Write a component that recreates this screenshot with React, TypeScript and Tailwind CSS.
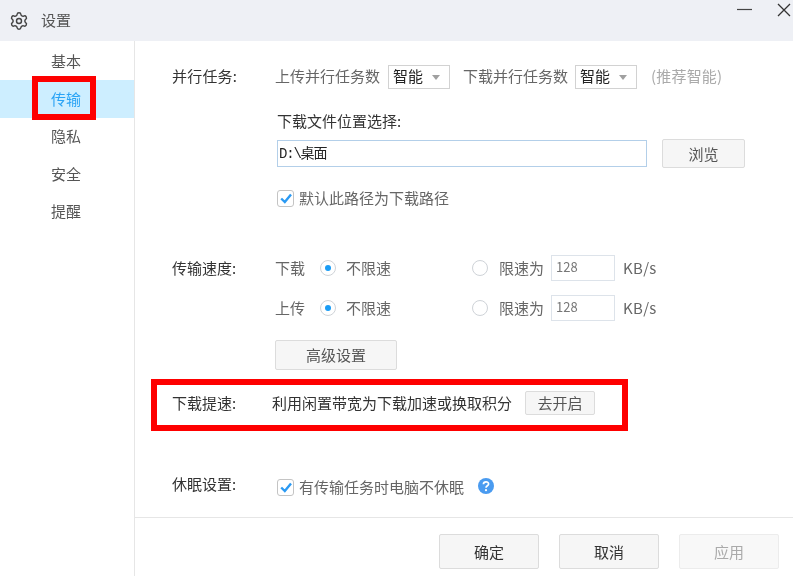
import React from "react";
import { Settings } from "lucide-react";

function Check() {
  return (
    <span className="flex h-[17px] w-[17px] shrink-0 items-center justify-center rounded-[3px] border-[1.5px] border-[#c4c4c4] bg-white">
      <svg viewBox="0 0 14 14" className="h-[14px] w-[14px]">
        <path d="M2.2 7.5 L5.8 11 L12 3.4" fill="none" stroke="#2b9af3" strokeWidth="2.4" />
      </svg>
    </span>
  );
}

function Radio({ on }: { on?: boolean }) {
  return (
    <span className="flex h-4 w-4 shrink-0 items-center justify-center rounded-full border-[1.5px] border-[#cfd3d8] bg-white">
      {on && <span className="h-[6px] w-[6px] rounded-full bg-[#1a9cf5]" />}
    </span>
  );
}

function Select() {
  return (
    <div className="flex h-6 w-[62px] items-center border-[1.5px] border-[#d2d2d2] bg-white pl-[4px] text-[#222]">
      <span className="pb-[2px]">智能</span>
      <span className="ml-[9px] h-0 w-0 border-x-[4.5px] border-t-[5px] border-x-transparent border-t-[#a0a0a0]" />
    </div>
  );
}

function Btn({ children, className }: { children: React.ReactNode; className: string }) {
  return (
    <div className={`flex items-center justify-center rounded-[2px] border-[1.5px] border-[#dcdcdc] bg-[#f6f6f6] ${className}`}>
      {children}
    </div>
  );
}

function SpeedRow({ label, className }: { label: string; className: string }) {
  return (
    <div className={`flex h-[26px] items-center text-[#666] ${className}`}>
      <span className="w-[103px] shrink-0 text-[#333]">{label === "下载" ? "传输速度:" : ""}</span>
      <span className="w-[45px] shrink-0">{label}</span>
      <Radio on />
      <span className="ml-[10px] w-[126px] shrink-0">不限速</span>
      <Radio />
      <span className="ml-[11px] w-[52px] shrink-0">限速为</span>
      <div className="flex h-[26px] w-[64px] shrink-0 items-center border-[1.5px] border-[#dde3ea] bg-white pb-[2px] pl-1 text-[13px] text-[#777]">
        128
      </div>
      <span className="ml-2 text-[15px] tracking-[0.3px]">KB/s</span>
    </div>
  );
}

export default function App() {
  const nav = ["基本", "传输", "隐私", "安全", "提醒"];
  return (
    <div
      className="relative flex h-[576px] w-[793px] flex-col overflow-hidden bg-white text-[15px] leading-5 blur-[0.4px]"
      style={{ fontFamily: '"Noto Sans CJK SC", "Liberation Sans", sans-serif' }}
    >
      <header className="flex h-[41px] shrink-0 items-center bg-[#eef0f5] pl-[9px] text-[#555]">
        <Settings size={20} strokeWidth={1.7} color="#444" />
        <span className="ml-[12px] pb-[2px]">设置</span>
        <div className="ml-auto flex items-start self-start">
          <svg viewBox="0 0 15 3" className="mt-2 h-[3px] w-[15px]">
            <path d="M0 1.5 H15" stroke="#444" strokeWidth="1.2" />
          </svg>
          <svg viewBox="0 0 14 14" className="mt-[3px] ml-[25px] mr-[2px] h-[14px] w-[14px]">
            <path d="M1 1 L13 13 M13 1 L1 13" stroke="#333" strokeWidth="1.3" />
          </svg>
        </div>
      </header>

      <div className="flex min-h-0 flex-1">
        <nav className="w-[135px] shrink-0 border-r border-[#e6e6e6] pt-[1.5px] text-[#555]">
          {nav.map((n) => (
            <div
              key={n}
              className={`flex h-[37.5px] items-center pl-[51px] ${n === "传输" ? "bg-[#cdeeff] text-[#29a3f5]" : ""}`}
            >
              {n}
            </div>
          ))}
        </nav>

        <main className="flex min-w-0 flex-1 flex-col">
          <section className="h-[477px] shrink-0 border-b border-[#e6e6e6] pl-[37px] pt-6">
            <div className="flex h-6 items-center text-[#666]">
              <span className="w-[103px] shrink-0 pb-[2px] tracking-[0.2px] text-[#333]">并行任务:</span>
              <span className="w-[113px] shrink-0 pb-[2px]">上传并行任务数</span>
              <Select />
              <span className="ml-[13px] w-[112px] shrink-0 pb-[2px]">下载并行任务数</span>
              <Select />
              <span className="ml-[14px] pb-[2px] tracking-[0.2px] text-[#aaa]">(推荐智能)</span>
            </div>

            <div className="ml-[105px] mt-[22px] h-5 text-[#333]">下载文件位置选择:</div>

            <div className="ml-[105px] mt-2 flex h-[29px] items-center">
              <div
                className="flex h-[27px] w-[370px] items-center border-[1.5px] border-[#b3cfe9] bg-white pl-[1px] text-[14px] tracking-[-1.2px] text-[#222]"
                style={{ fontFamily: '"Liberation Mono", "Noto Sans CJK SC", monospace' }}
              >
                D:\桌面
              </div>
              <Btn className="ml-[15px] h-[29px] w-[83px] text-[#555]">浏览</Btn>
            </div>

            <div className="ml-[105px] mt-5 flex h-5 items-center text-[#666]">
              <Check />
              <span className="ml-[5px]">默认此路径为下载路径</span>
            </div>

            <SpeedRow label="下载" className="mt-[47px]" />
            <SpeedRow label="上传" className="mt-[14px]" />

            <Btn className="ml-[103px] mt-[19px] h-[30px] w-[122px] text-[#555]">高级设置</Btn>

            <div className="mt-[21px] flex h-6 items-center text-[#333]">
              <span className="w-[100px] shrink-0">下载提速:</span>
              <span className="w-[253px] shrink-0">利用闲置带宽为下载加速或换取积分</span>
              <Btn className="h-[24px] w-[70px] text-[#555]">去开启</Btn>
            </div>

            <div className="mt-[60px] flex h-6 items-center">
              <span className="-mt-[6px] w-[105px] shrink-0 text-[#333]">休眠设置:</span>
              <Check />
              <span className="ml-[5px] text-[#666]">有传输任务时电脑不休眠</span>
              <svg viewBox="0 0 16 16" className="-mt-[3px] ml-[14px] h-4 w-4">
                <circle cx="8" cy="8" r="8" fill="#4a9bf0" />
                <path d="M5.4 6.2 C5.5 3.2 10.6 3.2 10.6 6 C10.6 7.8 8 7.8 8 9.8" fill="none" stroke="#fff" strokeWidth="1.7" />
                <circle cx="8" cy="12.2" r="1.1" fill="#fff" />
              </svg>
            </div>
          </section>

          <footer className="flex flex-1 items-start justify-end gap-5 pr-[14px] pt-4">
            <Btn className="h-[35px] w-[100px] text-[#333]">确定</Btn>
            <Btn className="h-[35px] w-[100px] text-[#333]">取消</Btn>
            <div className="flex h-[35px] w-[100px] items-center justify-center rounded-[2px] border-[1.5px] border-[#ececec] bg-[#f8f8f8] text-[#aaa]">
              应用
            </div>
          </footer>
        </main>
      </div>

      <div className="absolute left-[32px] top-[76px] h-[44px] w-[64px] border-[6px] border-[#fe0000]" />
      <div className="absolute left-[151px] top-[379px] h-[52px] w-[477px] border-[6px] border-[#fe0000]" />
    </div>
  );
}
